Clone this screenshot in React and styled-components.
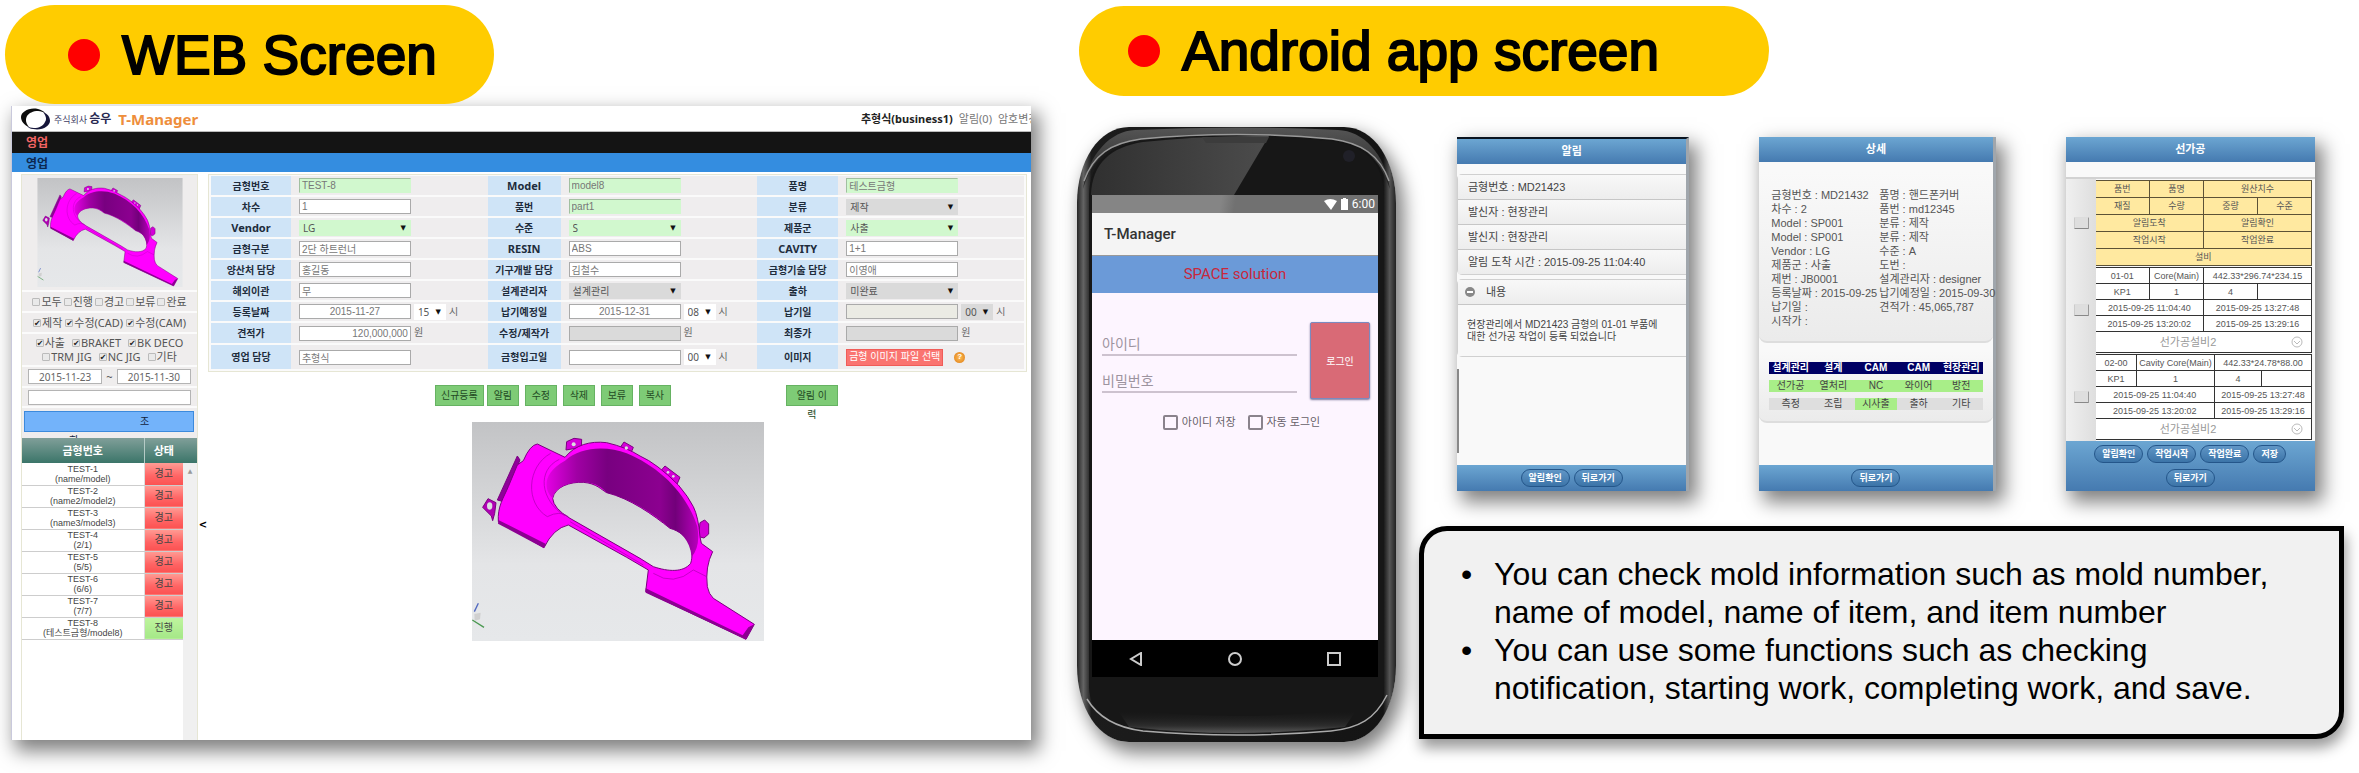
import React from 'react';
import styled, { createGlobalStyle, css } from 'styled-components';

const GlobalStyle = createGlobalStyle`
  *, *::before, *::after { box-sizing: border-box; }
  body {
    margin: 0;
    background: #fff;
    color: #000;
    font-family: "Liberation Sans", "Noto Sans CJK KR", sans-serif;
  }
  button, input, select { font-family: inherit; margin: 0; padding: 0; border-radius: 0; }
  h1, h2, h3, p, ul, dl, dd { margin: 0; padding: 0; font-weight: normal; }
  table { border-collapse: collapse; }
`;

const dropShadow = '6px 9px 18px 2px rgba(0, 0, 0, 0.5)';

const Page = styled.main`
  display: grid;
  grid-template-columns: minmax(0, 1026fr) minmax(0, 1267fr);
  gap: 46px;
  min-height: 100vh;
  padding: 5px 15px 31px 5px;
  overflow: hidden;
`;

const Column = styled.section`
  display: flex;
  flex-direction: column;
`;

const Pill = styled.h1`
  position: relative;
  z-index: 1;
  display: flex;
  align-items: center;
  gap: 22px;
  align-self: flex-start;
  width: ${(p) => (p.$wide ? '690px' : '489px')};
  height: ${(p) => (p.$wide ? '90px' : '99px')};
  margin: ${(p) => (p.$wide ? '1px 0 0 2px' : '0')};
  padding-left: ${(p) => (p.$wide ? '49px' : '63px')};
  border-radius: 50px;
  background: #fc0;
  font-size: 55px;
  line-height: 60px;
  white-space: nowrap;
  -webkit-text-stroke: 2px #000;
`;

const Dot = styled.span`
  width: 32px;
  height: 32px;
  border-radius: 50%;
  background: #f00;
`;

/* ---------- Web manager ---------- */

const WebWindow = styled.article`
  display: flex;
  flex: 1;
  flex-direction: column;
  margin: 2px 0 2px 6px;
  overflow: hidden;
  background: #fff;
`;

const WebFrame = styled.div`
  display: flex;
  flex: 1;
  flex-direction: column;
  border-left: 1px solid #c9c9dc;
`;

const WebShadow = styled.div`
  display: flex;
  flex: 1;
  flex-direction: column;
  & > article { box-shadow: ${dropShadow}; }
`;

const TopBar = styled.header`
  display: flex;
  align-items: center;
  height: 26px;
  padding-left: 9px;
  border-bottom: 1px solid #bbb;
  white-space: nowrap;
`;

const Company = styled.span`
  margin-left: 3px;
  color: #3c3c64;
  font: 9px/20px "Noto Sans CJK KR", sans-serif;
  strong { font-size: 12px; color: #282850; }
`;

const Product = styled.h2`
  flex: 1;
  margin-left: 7px;
  color: #ee8e3c;
  font: bold 15px/24px "Noto Sans", sans-serif;
`;

const UserInfo = styled.nav`
  display: flex;
  gap: 6px;
  width: 170px;
  overflow: hidden;
  color: #777;
  font: 11px/22px "Noto Sans", "Noto Sans CJK KR", sans-serif;
  strong { color: #222; }
  a { color: inherit; text-decoration: none; }
`;

const Strip = styled.div`
  height: ${(p) => (p.$dark ? '21px' : '19px')};
  padding-left: 14px;
  background: ${(p) => (p.$dark ? '#141414' : '#348de0')};
  color: ${(p) => (p.$dark ? '#f26464' : '#0c2850')};
  font: bold 12px/20px "Noto Sans CJK KR", sans-serif;
`;

const WebBody = styled.div`
  display: flex;
  flex: 1;
  padding: 2px 4px 0 9px;
`;

const Sidebar = styled.aside`
  display: flex;
  flex: none;
  flex-direction: column;
  width: 177px;
  border: 1px solid #e6e6d4;
  border-bottom: 0;
  color: #555;
  font: 11px/14px "Noto Sans", "Noto Sans CJK KR", sans-serif;
`;

const FilterRow = styled.div`
  display: flex;
  flex-wrap: wrap;
  align-items: center;
  align-content: center;
  justify-content: center;
  gap: 0 ${(p) => p.$gap || 3}px;
  min-height: ${(p) => p.$h}px;
  padding: 0 6px;
  border-bottom: 2px solid #fbfbfb;
  background: #efeded;
  svg { display: block; width: 146px; height: 109px; }
`;

const Check = styled.label`
  display: flex;
  align-items: center;
  gap: 1px;
  white-space: nowrap;
  input {
    display: grid;
    place-items: center;
    appearance: none;
    width: 8px;
    height: 8px;
    border: 1px solid #bbb;
    border-radius: 1px;
    background: #e9e9e9;
  }
  input:checked::before {
    content: '✔';
    color: #222;
    font: 8px/8px "DejaVu Sans", sans-serif;
  }
`;

const SideInput = styled.input`
  flex: 1;
  min-width: 0;
  height: 15px;
  border: 1px solid #b4b4b4;
  background: #fff;
  color: #666;
  font-size: 10px;
  text-align: center;
`;

const SearchArea = styled.div`
  height: 30px;
  padding: 3px 3px 0 2px;
  overflow: hidden;
  background: #efeded;
`;

const SearchButton = styled.button`
  display: block;
  width: 100%;
  height: 21px;
  border: 1px solid #3c8adc;
  background: #73b3fa;
  color: #12243c;
  font-size: 10px;
  text-align: left;
  span { display: block; height: 19px; padding-left: 44px; text-indent: 71px; line-height: 19px; }
`;

const MoldTable = styled.table`
  flex: none;
  width: 161px;
  font: 9px/10px "Liberation Sans", "Noto Sans CJK KR", sans-serif;
  text-align: center;
  th {
    height: 25px;
    background: linear-gradient(#809f99, #3b7569);
    color: #fff;
    font-size: 11px;
  }
  th:first-child { border-right: 1px solid #b5cbc6; }
  td { height: 22px; padding: 0; border-bottom: 1px solid #cdcdcd; color: #444; }
`;

const Status = styled.td`
  width: 39px;
  border-left: 1px solid #ddd;
  background: ${(p) => (p.$ok ? 'linear-gradient(#bff49e, #a5e888)' : 'linear-gradient(#ff9c94, #ff6464 60%, #fb5252)')};
  color: #333;
  font-size: 10px;
`;

const MoldList = styled.div`
  display: flex;
  flex: 1;
  align-items: flex-start;
`;

const Scrollbar = styled.div`
  flex: 1;
  align-self: stretch;
  padding-top: 30px;
  background: linear-gradient(#809f99, #3b7569) 0 0 / 100% 25px no-repeat, #f0f0f0;
  color: #999;
  font: 6px/6px "DejaVu Sans", sans-serif;
  text-align: center;
`;

const Collapse = styled.button`
  width: 10px;
  height: 14px;
  margin-top: 344px;
  border: 0;
  background: none;
  font: bold 10px/14px "DejaVu Sans", sans-serif;
`;

const WorkArea = styled.div`
  flex: 1;
  min-width: 0;
`;

const FormGrid = styled.form`
  display: grid;
  grid-template-columns: 80fr 197fr 73fr 197fr 81fr 186fr;
  grid-template-rows: repeat(7, minmax(19px, auto)) minmax(20px, auto) minmax(24px, auto);
  row-gap: 2px;
  padding: 1px 2px 2px;
  border: 1px solid #e6e6d4;
  background: #fafafa;
`;

const FieldName = styled.label`
  display: grid;
  place-items: center;
  background: #cfe4f7;
  color: #1e2c3c;
  font: bold ${(p) => (p.$latin ? 11 : 10)}px/14px "Noto Sans", "Noto Sans CJK KR", sans-serif;
  white-space: nowrap;
`;

const FieldBody = styled.div`
  display: flex;
  align-items: center;
  gap: 3px;
  padding-left: 8px;
  background: #efedee;
  color: #666;
  font-size: 10px;
  line-height: 14px;
`;

const tones = { green: '#d1f8ce', gray: '#dadada', cream: '#ebebe4', white: '#fff' };

const TextBox = styled.input`
  flex: none;
  width: 112px;
  height: 15px;
  padding: 0 2px;
  border: 1px solid #aaa;
  background: ${(p) => tones[p.$tone]};
  color: #777;
  font-size: 10px;
  text-align: ${(p) => p.$align || 'left'};
  ${(p) => p.$tone === 'green' && css`
    border-color: #a2bfa0 #d1f8ce #d1f8ce #a2bfa0;
  `}
`;

const SelectWrap = styled.span`
  position: relative;
  display: block;
  flex: none;
  width: ${(p) => (p.$small ? '32px' : '112px')};
  select {
    appearance: none;
    display: block;
    width: 100%;
    height: 16px;
    padding-left: 4px;
    border: 0;
    background: ${(p) => tones[p.$tone]};
    color: #555;
    font: 10px/16px "Noto Sans", "Noto Sans CJK KR", sans-serif;
  }
  &::after {
    content: '▼';
    position: absolute;
    top: 4px;
    right: 5px;
    color: #111;
    font: 7px/8px "DejaVu Sans", sans-serif;
    pointer-events: none;
  }
`;

const ImageButton = styled.button`
  height: 17px;
  width: 97px;
  margin-right: 8px;
  border: 1px solid #f05c58;
  background: #fa7470;
  color: #fff;
  font-size: 10px;
  line-height: 14px;
  white-space: nowrap;
`;

const HelpBadge = styled.span`
  display: grid;
  place-items: center;
  width: 11px;
  height: 11px;
  border-radius: 50%;
  background: radial-gradient(#ffbe55, #dc7a16);
  color: #fff;
  font: bold 8px/10px "Liberation Sans", sans-serif;
`;

const ButtonRow = styled.div`
  display: flex;
  align-items: flex-start;
  gap: 6px;
  padding: 13px 0 16px 27.7%;
`;

const GreenButton = styled.button`
  flex: none;
  width: ${(p) => p.$w || 32}px;
  height: 21px;
  margin-left: ${(p) => p.$push || 0};
  border: 1px solid #66b262;
  background: #7ecb76;
  color: #244a24;
  font-size: 10px;
  white-space: nowrap;
  span { display: block; height: 19px; line-height: 19px; }
`;

const ModelView = styled.figure`
  width: 292px;
  margin: 0 auto;
  svg { display: block; width: 100%; height: auto; }
`;

/* ---------- Phone ---------- */

const AppRow = styled.div`
  display: flex;
  flex: 1;
  gap: 23px;
  margin-top: 31px;
`;

const Phone = styled.article`
  position: relative;
  display: flex;
  flex: none;
  flex-direction: column;
  width: 319px;
  padding: 68px 18px 65px 15px;
  border-radius: 52px / 76px;
  box-shadow: ${dropShadow};
`;

const PhoneShell = styled.svg`
  position: absolute;
  inset: 0;
  width: 100%;
  height: 100%;
`;

const PhoneScreen = styled.div`
  position: relative;
  display: flex;
  flex: 1;
  flex-direction: column;
  background: #fdf5ff;
`;

const StatusBar = styled.div`
  display: flex;
  align-items: center;
  justify-content: flex-end;
  gap: 3px;
  height: 18px;
  padding-right: 3px;
  background: linear-gradient(100deg, #858585 45%, #717171 50%);
  color: #fff;
  font: 12px/18px Roboto, sans-serif;
`;

const AppBar = styled.h2`
  height: 43px;
  padding-left: 12px;
  border-bottom: 1px solid #999;
  background: #f4f4f4;
  color: #333;
  font: 500 15px/42px Roboto, sans-serif;
`;

const Banner = styled.p`
  height: 37px;
  background: #6b9ad8;
  color: #c8283c;
  font: 15px/36px Roboto, sans-serif;
  text-align: center;
`;

const Login = styled.form`
  display: grid;
  grid-template-columns: 1fr 60px;
  column-gap: 13px;
  padding: 29px 8px 0 10px;
`;

const Credentials = styled.div`
  display: flex;
  flex-direction: column;
  gap: 13px;
  padding-top: 10px;
  input {
    width: 100%;
    height: 24px;
    padding-top: 2px;
    border: 0;
    border-bottom: 2px solid #cdc2cf;
    background: none;
    font-size: 14px;
  }
  input::placeholder { color: #9d949f; }
`;

const LoginButton = styled.button`
  height: 77px;
  border: 1px solid #7a8ac0;
  border-radius: 2px;
  background: #d96a76;
  box-shadow: 0 1px 2px rgba(40, 40, 90, 0.6);
  color: #fff;
  font-size: 10px;
`;

const Remember = styled.div`
  display: flex;
  grid-column: 1 / -1;
  gap: 12px;
  justify-content: center;
  margin-top: 14px;
  padding-left: 11px;
  label {
    display: flex;
    align-items: center;
    gap: 4px;
    color: #665f68;
    font-size: 11px;
    line-height: 18px;
  }
  input {
    appearance: none;
    width: 15px;
    height: 15px;
    border: 2px solid #8a828c;
    border-radius: 2px;
  }
`;

const NavBar = styled.nav`
  display: flex;
  align-items: center;
  justify-content: space-between;
  height: 37px;
  margin-top: auto;
  padding: 0 34px;
  background: #000;
  button { display: grid; place-items: center; width: 20px; height: 20px; border: 0; background: none; }
`;

/* ---------- App panels ---------- */

const AppSide = styled.div`
  display: flex;
  flex: 1;
  flex-direction: column;
  min-width: 0;
`;

const Screens = styled.div`
  display: grid;
  grid-template-columns: 232fr 236fr 249fr;
  gap: 70px;
  margin-top: 10px;
  padding: 0 29px 0 38px;
`;

const Panel = styled.article`
  display: flex;
  flex-direction: column;
  min-width: 0;
  min-height: 354px;
  border-top: ${(p) => (p.$topLine ? '2px solid #0a1420' : '0')};
  border-right: ${(p) => (p.$edge ? '3px solid #a0a6ac' : '0')};
  background: #f9f9f9;
  box-shadow: ${dropShadow};
`;

const blue = 'linear-gradient(#6ca6d2, #457ab0)';

const PanelHead = styled.h3`
  height: 25px;
  background: ${blue};
  color: #fff;
  font-size: 11px;
  font-weight: bold;
  line-height: 25px;
  text-align: center;
`;

const PanelFoot = styled.footer`
  display: flex;
  flex-wrap: wrap;
  justify-content: center;
  gap: 6px 4px;
  margin-top: auto;
  padding: 4px 20px;
  background: ${blue};
`;

const RoundButton = styled.button`
  width: ${(p) => p.$w || 49}px;
  height: 18px;
  border: 1px solid #24568a;
  border-radius: 9px;
  background: linear-gradient(#6096c6, #3c74a8);
  color: #fff;
  font-size: 9px;
  font-weight: bold;
  line-height: 14px;
  white-space: nowrap;
`;

const Card = styled.ul`
  margin-top: ${(p) => p.$top}px;
  border: 1px solid #d0d0d0;
  border-right: 0;
  border-radius: 5px 0 0 5px;
  background: #f6f6f6;
  list-style: none;
  color: #444;
  font-size: 11px;
  line-height: 24px;
`;

const CardRow = styled.li`
  display: flex;
  align-items: center;
  gap: 10px;
  min-height: 24px;
  padding-left: ${(p) => (p.$icon ? '6px' : '10px')};
  border-bottom: ${(p) => (p.$plain ? '0' : '1px solid #c6c6c6')};
  background: linear-gradient(#f8f8f8, #ededed);
  white-space: nowrap;
`;

const Message = styled.li`
  height: 51px;
  padding: 14px 0 0 9px;
  background: #f8f8f8;
  font-size: 10px;
  line-height: 12px;
  white-space: nowrap;
`;

const SideLine = styled.div`
  height: 84px;
  margin-top: 12px;
  border-left: 2px solid #888;
`;

const Details = styled.ul`
  display: grid;
  grid-template-columns: 108px 1fr;
  margin-top: 10px;
  padding: 16px 0 13px 12px;
  border-bottom: 2px solid #ddd;
  border-radius: 0 0 8px 8px;
  background: linear-gradient(#f9f9f9, #ebebeb);
  color: #555;
  list-style: none;
  font-size: 11px;
  line-height: 14px;
  white-space: nowrap;
  li { min-height: 14px; width: 0; }
`;

const Steps = styled.div`
  margin-top: 8px;
  padding: 5px 10px 5px;
  border-bottom: 2px solid #ddd;
  border-radius: 0 0 8px 8px;
  background: linear-gradient(#f9f9f9, #ebebeb);
  table {
    width: 100%;
    table-layout: fixed;
    border-collapse: separate;
    border-spacing: 0 6px;
    font-size: 10px;
    line-height: 12px;
    text-align: center;
    white-space: nowrap;
  }
  th, td { height: 12px; padding: 0; }
  th { background: #000064; color: #fff; }
`;

const Step = styled.td`
  background: ${(p) => (p.$on ? '#a8ee88' : '#dedede')};
  color: #444;
`;

const WorkList = styled.div`
  margin-top: 15px;
  padding: 1px 3px 0 1px;
  border-top: 2px solid #d2d2d2;
  background: linear-gradient(90deg, #f0f0f0, #dedede 30px, #f9f9f9 30px);
`;

const WorkGroup = styled.div`
  display: grid;
  grid-template-columns: 29px minmax(0, 1fr);
  align-items: center;
  justify-items: center;
  margin-bottom: 1px;
  & > input {
    appearance: none;
    width: 15px;
    height: 12px;
    border: 1px solid #bbb;
    border-color: #ddd #999 #888 #ccc;
    border-radius: 1px;
    background: #dedede;
  }
`;

const WorkTable = styled.table`
  width: 100%;
  table-layout: fixed;
  background: ${(p) => (p.$head ? '#ffe9a0' : '#fff')};
  color: #555;
  font-size: 9px;
  line-height: 10px;
  text-align: center;
  white-space: nowrap;
  td, th {
    height: ${(p) => (p.$head ? 17 : 16)}px;
    padding: 0;
    border: 1px solid ${(p) => (p.$head ? '#5c5236' : '#333')};
    border-left-color: ${(p) => (p.$head ? '#a08e50' : '#777')};
    font-weight: normal;
  }
  tr > :first-child { border-left: 0; }
`;

const Machine = styled.td`
  && { height: 21px; border-left: 0; color: #999; font-size: 11px; }
  div { display: flex; align-items: center; justify-content: space-between; padding: 0 8px 0 64px; }
`;

/* ---------- Notes ---------- */

const Notes = styled.aside`
  flex: 1;
  margin-top: 35px;
  margin-bottom: 3px;
  padding: 24px 40px 0 70px;
  border: 5px solid #000;
  border-radius: 28px 0 28px 0;
  background: #f1f1f1;
  box-shadow: 2px 9px 14px rgba(0, 0, 0, 0.4);
  font-size: 32px;
  line-height: 38px;
  ul { list-style: none; }
  li { display: flex; max-width: 810px; }
  li::before { content: '•'; flex: none; width: 33px; margin-left: -33px; }
`;

function DashboardPart() {
  const id = React.useId();
  return (
    <svg viewBox="96 156 876 658" role="img" aria-label="Mold model">
      <defs>
        <linearGradient id={`${id}bg`} x2="0" y2="1">
          <stop offset="0" stopColor="#c2c3c5" />
          <stop offset=".65" stopColor="#e4e5e7" />
          <stop offset="1" stopColor="#e6e8ea" />
        </linearGradient>
        <linearGradient id={`${id}wall`}>
          <stop offset="0" stopColor="#e400e4" />
          <stop offset=".2" stopColor="#a000a4" />
          <stop offset=".4" stopColor="#780080" />
          <stop offset=".75" stopColor="#8c0090" />
          <stop offset=".85" stopColor="#72007a" />
          <stop offset="1" stopColor="#b800bc" />
        </linearGradient>
      </defs>
      <rect x="96" y="156" width="876" height="658" fill={`url(#${id}bg)`} />
      <g stroke="#7a0080" strokeWidth="3" strokeLinejoin="round">
        <path fill="#d400d8" d="M378 240 380 215 402 205 425 208 424 232ZM532 245 552 216 580 232 570 256ZM660 305 675 288 720 322 708 350ZM776 500 780 458 794 450 806 462 806 492 792 504Z" />
        <path fill="#b000b4" d="M128 412 144 386 168 398 164 430 158 452 154 438Z" />
        <path fill="#90009a" d="M172 390 232 258 240 270 190 395Z" />
        <path
          fill="#f0f"
          fillRule="evenodd"
          d="M175 455C172 410 190 385 205 350L232 285 250 272Q270 225 292 222L375 262C405 225 450 212 500 218Q560 232 600 258 650 280 715 345 745 380 760 410 775 440 780 500L784 520 818 545Q795 590 802 650 806 672 820 685L943 763 918 808 617 665 625 600 560 562 385 465Q340 475 312 533ZM338 385C345 350 390 335 430 337C470 340 485 360 500 368C570 385 640 435 690 475C745 490 765 540 752 580C730 608 685 605 640 590L600 565 390 445Q340 415 338 385Z"
        />
      </g>
      <path
        fill={`url(#${id}wall)`}
        d="M375 272C420 230 500 226 560 250C660 292 740 370 772 470Q782 530 755 560C750 510 720 482 690 475C640 430 570 385 500 368C480 345 450 335 430 337C390 335 345 350 338 385C312 360 305 310 375 272Z"
      />
      <path fill="#8c0092" d="M175 450 318 522 312 535 174 461ZM617 655 908 796 918 808 617 668ZM925 772 943 763 918 808 908 796Z" />
      <g fill="none" stroke="#a800ae" strokeWidth="2">
        <path d="M332 250C260 290 255 400 322 440M358 268C290 300 300 390 375 438M322 440Q360 420 385 440M640 610Q700 650 760 600L800 620M390 455 610 585" />
      </g>
      <g fill="#dcdde0">
        <ellipse cx="149" cy="408" rx="8" ry="11" />
        <circle cx="401" cy="223" r="6" />
        <circle cx="559" cy="234" r="5" />
        <circle cx="684" cy="307" r="4" />
        <circle cx="700" cy="319" r="4" />
      </g>
      <path d="M103 725 115 700" stroke="#5068c0" strokeWidth="4" />
      <path d="M97 750 132 772" stroke="#4a9850" strokeWidth="4" />
      <path d="M103 732 122 728 120 748 104 752Z" fill="#d0d0d0" />
    </svg>
  );
}

const CompanyLogo = () => (
  <svg width="30" height="22" viewBox="0 0 30 22" aria-hidden="true">
    <path d="M17 1C8-1 0 4 0 9c0 4 3 8 8 10C5 15 4 12 6 8c2-3 6-5 11-5 3 0 5 1 7 2-1-2-4-3-7-4Z" fill="#0c0c0c" />
    <path d="M12 21c9 2 17-3 17-8 0-4-2-7-7-9 3 4 4 7 2 10-2 4-6 6-11 6-3 0-5-1-7-2 1 1 3 3 6 3Z" fill="#16163a" />
  </svg>
);

const Select = ({ value, tone = 'white', small, id }) => (
  <SelectWrap $small={small} $tone={tone}>
    <select id={id} aria-label={id ? undefined : '시간'} defaultValue={value}>
      <option>{value}</option>
    </select>
  </SelectWrap>
);

const fields = [
  { name: '금형번호', value: 'TEST-8', tone: 'green' },
  { name: 'Model', latin: true, value: 'model8', tone: 'green' },
  { name: '품명', value: '테스트금형', tone: 'green' },
  { name: '차수', value: '1' },
  { name: '품번', value: 'part1', tone: 'green' },
  { name: '분류', value: '제작', select: true, tone: 'gray' },
  { name: 'Vendor', latin: true, value: 'LG', select: true, tone: 'green' },
  { name: '수준', value: 'S', select: true, tone: 'green' },
  { name: '제품군', value: '사출', select: true, tone: 'green' },
  { name: '금형구분', value: '2단 하트런너' },
  { name: 'RESIN', latin: true, value: 'ABS' },
  { name: 'CAVITY', latin: true, value: '1+1' },
  { name: '양산처 담당', value: '홍길동' },
  { name: '기구개발 담당', value: '김철수' },
  { name: '금형기술 담당', value: '이영애' },
  { name: '해외이관', value: '무' },
  { name: '설계관리자', value: '설계관리', select: true, tone: 'gray' },
  { name: '출하', value: '미완료', select: true, tone: 'gray' },
  { name: '등록날짜', value: '2015-11-27', align: 'center', hour: '15' },
  { name: '납기예정일', value: '2015-12-31', align: 'center', hour: '08' },
  { name: '납기일', value: '', tone: 'cream', hour: '00', hourTone: 'gray' },
  { name: '견적가', value: '120,000,000', align: 'right', unit: '원' },
  { name: '수정/제작가', value: '', tone: 'gray', unit: '원' },
  { name: '최종가', value: '', tone: 'gray', unit: '원' },
  { name: '영업 담당', value: '추형식' },
  { name: '금형입고일', value: '', hour: '00' },
  { name: '이미지', upload: true },
];

function Field({ field, index }) {
  const id = `field-${index}`;
  const tone = field.tone || 'white';
  return (
    <>
      <FieldName htmlFor={id} $latin={field.latin}>{field.name}</FieldName>
      <FieldBody>
        {field.upload && (
          <>
            <ImageButton id={id} type="button">금형 이미지 파일 선택</ImageButton>
            <HelpBadge>?</HelpBadge>
          </>
        )}
        {field.select && <Select id={id} value={field.value} tone={tone} />}
        {!field.upload && !field.select && (
          <TextBox id={id} defaultValue={field.value} $tone={tone} $align={field.align} />
        )}
        {field.hour && (
          <>
            <Select small value={field.hour} tone={field.hourTone} />
            <span>시</span>
          </>
        )}
        {field.unit && <span>{field.unit}</span>}
      </FieldBody>
    </>
  );
}

const Tick = ({ text, on }) => (
  <Check>
    <input type="checkbox" defaultChecked={on} />
    {text}
  </Check>
);

const molds = [
  ['TEST-1', '(name/model)'],
  ['TEST-2', '(name2/model2)'],
  ['TEST-3', '(name3/model3)'],
  ['TEST-4', '(2/1)'],
  ['TEST-5', '(5/5)'],
  ['TEST-6', '(6/6)'],
  ['TEST-7', '(7/7)'],
  ['TEST-8', '(테스트금형/model8)', true],
];

function WebManager() {
  return (
    <WebShadow>
      <WebWindow>
        <WebFrame>
          <TopBar>
            <CompanyLogo />
            <Company>주식회사 <strong>승우</strong></Company>
            <Product>T-Manager</Product>
            <UserInfo>
              <strong>추형식(business1)</strong>
              <a href="#alerts">알림(0)</a>
              <a href="#password">암호변경</a>
            </UserInfo>
          </TopBar>
          <Strip $dark>영업</Strip>
          <Strip>영업</Strip>
          <WebBody>
            <Sidebar>
              <FilterRow $h={117}><DashboardPart /></FilterRow>
              <FilterRow $h={21} $gap={2}>
                {['모두', '진행', '경고', '보류', '완료'].map((t) => <Tick key={t} text={t} />)}
              </FilterRow>
              <FilterRow $h={21}>
                <Tick text="제작" on /><Tick text="수정(CAD)" on /><Tick text="수정(CAM)" on />
              </FilterRow>
              <FilterRow $h={33} $gap={7}>
                <Tick text="사출" on /><Tick text="BRAKET" on /><Tick text="BK DECO" on />
                <Tick text="TRM JIG" /><Tick text="NC JIG" on /><Tick text="기타" />
              </FilterRow>
              <FilterRow $h={21} $gap={4}>
                <SideInput aria-label="시작일" defaultValue="2015-11-23" />
                ~
                <SideInput aria-label="종료일" defaultValue="2015-11-30" />
              </FilterRow>
              <FilterRow $h={20}>
                <SideInput aria-label="검색어" />
              </FilterRow>
              <SearchArea>
                <SearchButton type="button"><span>조<br />회</span></SearchButton>
              </SearchArea>
              <MoldList>
                <MoldTable>
                  <thead>
                    <tr><th>금형번호</th><th>상태</th></tr>
                  </thead>
                  <tbody>
                    {molds.map(([name, model, ok]) => (
                      <tr key={name}>
                        <td>{name}<br />{model}</td>
                        <Status $ok={ok}>{ok ? '진행' : '경고'}</Status>
                      </tr>
                    ))}
                  </tbody>
                </MoldTable>
                <Scrollbar>▲</Scrollbar>
              </MoldList>
            </Sidebar>
            <Collapse type="button">&lt;</Collapse>
            <WorkArea>
              <FormGrid>
                {fields.map((f, i) => <Field key={f.name} field={f} index={i} />)}
              </FormGrid>
              <ButtonRow>
                <GreenButton $w={49}><span>신규등록</span></GreenButton>
                <GreenButton $push="-3px"><span>알림</span></GreenButton>
                {['수정', '삭제', '보류', '복사'].map((t) => (
                  <GreenButton key={t}><span>{t}</span></GreenButton>
                ))}
                <GreenButton $w={52} $push="109px"><span>알림 이<br />력</span></GreenButton>
              </ButtonRow>
              <ModelView><DashboardPart /></ModelView>
            </WorkArea>
          </WebBody>
        </WebFrame>
      </WebWindow>
    </WebShadow>
  );
}

function PhoneMock() {
  return (
    <Phone>
      <PhoneShell viewBox="0 0 319 615" preserveAspectRatio="none" aria-hidden="true">
        <defs>
          <linearGradient id="rim">
            <stop offset="0" stopColor="#262626" />
            <stop offset=".02" stopColor="#646464" />
            <stop offset=".045" stopColor="#1c1c1c" />
            <stop offset=".96" stopColor="#141414" />
            <stop offset=".98" stopColor="#555" />
            <stop offset="1" stopColor="#222" />
          </linearGradient>
          <linearGradient id="glare" x1="0" y1="0" x2="1" y2="0">
            <stop offset="0" stopColor="#303030" />
            <stop offset="1" stopColor="#4c4c4c" />
          </linearGradient>
          <linearGradient id="chin" x2="0" y2="1">
            <stop offset="0" stopColor="#141414" stopOpacity="0" />
            <stop offset=".7" stopColor="#444" />
            <stop offset="1" stopColor="#999" />
          </linearGradient>
          <linearGradient id="bezel" x2="0" y2="1">
            <stop offset="0" stopColor="#555" />
            <stop offset="1" stopColor="#222" />
          </linearGradient>
        </defs>
        <path d="M0 76C0 34 22 0 52 0H267C297 0 319 34 319 76V539C319 581 297 615 267 615H52C22 615 0 581 0 539Z" fill="url(#rim)" />
        <path d="M6 62C12 26 34 4 58 3Q160-2 261 3C286 4 308 26 313 62C302 30 285 15 255 12Q160 3 64 12C34 15 16 30 6 62Z" fill="url(#bezel)" />
        <path d="M12 68C13 34 32 19 66 14Q160 5 254 14C288 19 306 34 307 68V560C306 588 284 599 252 602Q160 608 66 602C34 599 13 588 12 560Z" fill="#171717" />
        <path d="M14 68C15 36 34 20 66 15Q130 8 192 9L157 68Z" fill="url(#glare)" />
        <path d="M7 54C16 28 34 16 64 12Q160 3 255 12C284 16 303 28 312 54" fill="none" stroke="#999" strokeWidth="1.5" />
        <path d="M125 10H192L189 16H129Z" fill="#3c3c3c" />
        <circle cx="272" cy="29" r="6" fill="#202028" />
        <path d="M40 582Q160 596 280 582L268 600Q160 612 52 600Z" fill="url(#chin)" opacity=".5" />
        <path d="M10 572C22 592 42 601 66 604Q160 612 254 604C282 601 298 592 310 568" fill="none" stroke="#aaa" strokeWidth="1.5" />
      </PhoneShell>
      <PhoneScreen>
        <StatusBar>
          <svg width="13" height="11" viewBox="0 0 13 11" aria-hidden="true">
            <path d="M0 2Q6-2 13 2L7 11Z" fill="#fff" />
          </svg>
          <svg width="9" height="12" viewBox="0 0 9 12" aria-hidden="true">
            <path d="M3 0H6V1H8V12H1V1H3Z" fill="#fff" />
          </svg>
          6:00
        </StatusBar>
        <AppBar>T-Manager</AppBar>
        <Banner>SPACE solution</Banner>
        <Login>
          <Credentials>
            <input aria-label="아이디" placeholder="아이디" />
            <input aria-label="비밀번호" placeholder="비밀번호" />
          </Credentials>
          <LoginButton type="button">로그인</LoginButton>
          <Remember>
            <label><input type="checkbox" />아이디 저장</label>
            <label><input type="checkbox" />자동 로그인</label>
          </Remember>
        </Login>
        <NavBar>
          <button aria-label="Back">
            <svg width="14" height="14" fill="none" stroke="#ccc" strokeWidth="2"><path d="M12 1V13L2 7Z" /></svg>
          </button>
          <button aria-label="Home">
            <svg width="14" height="14" fill="none" stroke="#ccc" strokeWidth="2"><circle cx="7" cy="7" r="6" /></svg>
          </button>
          <button aria-label="Recent">
            <svg width="14" height="14" fill="none" stroke="#ccc" strokeWidth="2"><rect x="1" y="1" width="12" height="12" /></svg>
          </button>
        </NavBar>
      </PhoneScreen>
    </Phone>
  );
}

const details = [
  '금형번호 : MD21432', '품명 : 핸드폰커버',
  '차수 : 2', '품번 : md12345',
  'Model : SP001', '분류 : 제작',
  'Model : SP001', '분류 : 제작',
  'Vendor : LG', '수준 : A',
  '제품군 : 사출', '도번 :',
  '제번 : JB0001', '설계관리자 : designer',
  '등록날짜 : 2015-09-25', '납기예정일 : 2015-09-30',
  '납기일 :', '견적가 : 45,065,787',
  '시작가 :', '',
];

function WorkItem({ widths, part, name, size }) {
  return (
    <WorkGroup>
      <input type="checkbox" aria-label={part} />
      <WorkTable>
        <colgroup>{widths.map((w, i) => <col key={i} style={{ width: `${w}%` }} />)}</colgroup>
        <tbody>
          <tr><td>{part}</td><td>{name}</td><td colSpan={2}>{size}</td></tr>
          <tr><td>KP1</td><td>1</td><td>4</td><td /></tr>
          <tr><td colSpan={2}>2015-09-25 11:04:40</td><td colSpan={2}>2015-09-25 13:27:48</td></tr>
          <tr><td colSpan={2}>2015-09-25 13:20:02</td><td colSpan={2}>2015-09-25 13:29:16</td></tr>
          <tr>
            <Machine colSpan={4}>
              <div>
                선가공설비2
                <svg width="12" height="12" viewBox="0 0 12 12" fill="none" stroke="#bbb" aria-hidden="true">
                  <circle cx="6" cy="6" r="5" />
                  <path d="M3 5 6 8 9 5" />
                </svg>
              </div>
            </Machine>
          </tr>
        </tbody>
      </WorkTable>
    </WorkGroup>
  );
}

function AppScreens() {
  return (
    <Screens>
      <Panel $topLine $edge>
        <PanelHead>알림</PanelHead>
        <Card $top={10}>
          <CardRow>금형번호 : MD21423</CardRow>
          <CardRow>발신자 : 현장관리</CardRow>
          <CardRow>발신지 : 현장관리</CardRow>
          <CardRow $plain>알림 도착 시간 : 2015-09-25 11:04:40</CardRow>
        </Card>
        <Card $top={4}>
          <CardRow $icon>
            <svg width="12" height="12" viewBox="0 0 12 12" aria-hidden="true">
              <circle cx="6" cy="6" r="5" fill="#888" />
              <path d="M3 6H9" stroke="#fff" strokeWidth="2" />
            </svg>
            내용
          </CardRow>
          <Message>
            현장관리에서 MD21423 금형의 01-01 부품에<br />
            대한 선가공 작업이 등록 되었습니다
          </Message>
        </Card>
        <SideLine />
        <PanelFoot>
          <RoundButton>알림확인</RoundButton>
          <RoundButton>뒤로가기</RoundButton>
        </PanelFoot>
      </Panel>

      <Panel $edge>
        <PanelHead>상세</PanelHead>
        <Details>
          {details.map((d, i) => <li key={i}>{d}</li>)}
        </Details>
        <Steps>
          <table>
            <thead>
              <tr><th>설계관리</th><th>설계</th><th>CAM</th><th>CAM</th><th>현장관리</th></tr>
            </thead>
            <tbody>
              <tr>{['선가공', '열처리', 'NC', '와이어', '방전'].map((s) => <Step key={s} $on>{s}</Step>)}</tr>
              <tr>{['측정', '조립', '시사출', '출하', '기타'].map((s) => <Step key={s} $on={s === '시사출'}>{s}</Step>)}</tr>
            </tbody>
          </table>
        </Steps>
        <PanelFoot>
          <RoundButton>뒤로가기</RoundButton>
        </PanelFoot>
      </Panel>

      <Panel>
        <PanelHead>선가공</PanelHead>
        <WorkList>
          <WorkGroup>
            <input type="checkbox" aria-label="전체 선택" />
            <WorkTable $head>
              <tbody>
                <tr><th>품번</th><th>품명</th><th colSpan={2}>원산치수</th></tr>
                <tr><th>재질</th><th>수량</th><th>중량</th><th>수준</th></tr>
                <tr><th colSpan={2}>알림도착</th><th colSpan={2}>알림확인</th></tr>
                <tr><th colSpan={2}>작업시작</th><th colSpan={2}>작업완료</th></tr>
                <tr><th colSpan={4}>설비</th></tr>
              </tbody>
            </WorkTable>
          </WorkGroup>
          <WorkItem widths={[25, 25, 25, 25]} part="01-01" name="Core(Main)" size="442.33*296.74*234.15" />
          <WorkItem widths={[19, 36, 22, 23]} part="02-00" name="Cavity Core(Main)" size="442.33*24.78*88.00" />
        </WorkList>
        <PanelFoot>
          <RoundButton>알림확인</RoundButton>
          <RoundButton>작업시작</RoundButton>
          <RoundButton>작업완료</RoundButton>
          <RoundButton $w={33}>저장</RoundButton>
          <RoundButton>뒤로가기</RoundButton>
        </PanelFoot>
      </Panel>
    </Screens>
  );
}

export default function App() {
  return (
    <>
      <GlobalStyle />
      <Page>
        <Column>
          <Pill><Dot />WEB Screen</Pill>
          <WebManager />
        </Column>
        <Column>
          <Pill $wide><Dot />Android app screen</Pill>
          <AppRow>
            <PhoneMock />
            <AppSide>
              <AppScreens />
              <Notes>
                <ul>
                  <li>You can check mold information such as mold number, name of model, name of item, and item number</li>
                  <li>You can use some functions such as checking notification, starting work, completing work, and save.</li>
                </ul>
              </Notes>
            </AppSide>
          </AppRow>
        </Column>
      </Page>
    </>
  );
}
